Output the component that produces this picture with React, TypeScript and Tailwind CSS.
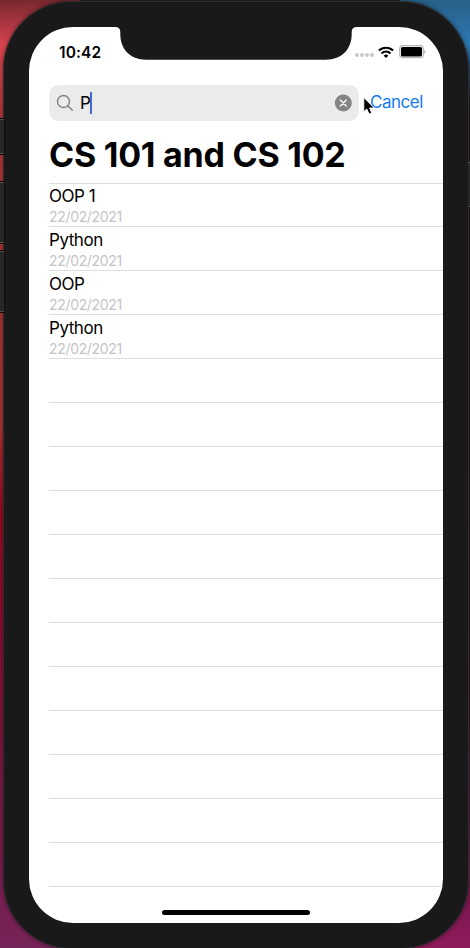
type Lecture = { name: string; date: string };

const lectures: Lecture[] = [
  { name: "OOP 1", date: "22/02/2021" },
  { name: "Python", date: "22/02/2021" },
  { name: "OOP", date: "22/02/2021" },
  { name: "Python", date: "22/02/2021" },
];

const emptyRows = Array.from({ length: 12 }, (_, i) => i);

function Notch() {
  return (
    <svg className="absolute left-[86px] top-0" width="242" height="33" viewBox="0 0 242 33" fill="#191919">
      <path d="M0 0C3.5 0 5.3 1.6 5.3 5V7C5.3 22 15 32.7 31 32.7H211C227 32.7 236.7 22 236.7 7V5C236.7 1.6 238.5 0 242 0Z" />
    </svg>
  );
}

function StatusBar() {
  return (
    <div className="flex h-[58px] items-start justify-between pl-[30px] pr-[17px]">
      <div className="pt-4 text-[15.5px] font-semibold leading-5 tracking-[0.1px]">10:42</div>
      <div className="flex items-center pt-[18px]">
        <div className="mr-[4px] mt-[6px] flex gap-[1px]">
          {[0, 1, 2, 3].map((i) => (
            <span key={i} className="size-1 rounded-full bg-[#c9c9c9]" />
          ))}
        </div>
        <svg width="16" height="13" viewBox="0 0 16 13" fill="none" stroke="#000" strokeWidth="2.1">
          <path d="M.9 4.600a10.200 10.200 0 0 1 14.200 0" />
          <path d="M3.500 7.400a6.400 6.400 0 0 1 9 0" />
          <path d="M8 12 5.700 9.700a3.300 3.300 0 0 1 4.600 0Z" fill="#000" stroke="none" />
        </svg>
        <svg className="ml-[5px]" width="27" height="14" viewBox="0 0 27 14">
          <rect x=".7" y=".7" width="23.6" height="12" rx="3.2" fill="#fff" stroke="#b5b5b5" strokeWidth="1.2" />
          <rect x="2" y="2" width="21" height="9.4" rx="1.6" />
          <path d="M25.300 4.800v4c1.600-.7 1.600-3.300 0-4Z" fill="#aaa" />
        </svg>
      </div>
    </div>
  );
}

function SearchBar() {
  return (
    <div className="flex h-9 items-center pl-5">
      <div className="flex h-9 w-[310px] items-center rounded-[10px] bg-[#ebebeb] pl-[7px] pr-[7px]">
        <svg width="18" height="18" viewBox="0 0 18 18" fill="none" stroke="#858589" strokeWidth="1.5" strokeLinecap="round">
          <circle cx="7.5" cy="7.5" r="6" />
          <path d="m12 12 4.300 4.300" />
        </svg>
        <span className="ml-[6px] text-[17px] leading-6">P</span>
        <span className="-ml-px h-[22px] w-[2px] bg-[#4568d8]" />
        <svg className="ml-auto" width="18" height="18" viewBox="0 0 18 18">
          <circle cx="9.3" cy="9" r="8.5" fill="#848487" />
          <path d="m6.300 6 6 6m0-6-6 6" stroke="#f2f2f2" strokeWidth="1.5" strokeLinecap="round" />
        </svg>
      </div>
      <button className="mb-[2px] ml-[11px] text-[17px] leading-6 tracking-[-0.5px] text-[#147bf5]">Cancel</button>
    </div>
  );
}

function Pointer() {
  return (
    <svg className="absolute left-[334px] top-[70px]" width="13" height="18" viewBox="0 0 13 18">
      <path d="M.8.500v14.200l3-2.700 2.300 5 2.600-1.100-2.100-4.900h4.700Z" fill="#000" stroke="#fff" strokeWidth=".9" strokeLinejoin="round" />
    </svg>
  );
}

export default function App() {
  return (
    <div
      className="relative flex h-[948px] w-[470px] overflow-hidden bg-[linear-gradient(to_bottom,#7a2730_0,#d84450_45px,#b03436_120px,#a93232_330px,#ab3030_430px,#9a0820_510px,#8c0c30_640px,#801647_790px,#762357_948px)] pl-[3px] text-black antialiased"
      style={{ fontFamily: 'Inter, "Liberation Sans", sans-serif' }}
    >
      <div className="absolute right-0 top-0 h-[474px] w-[235px] bg-[linear-gradient(to_bottom,#286087_0,#2d79b4_45px,#183e5e_75px,#201416_110px,#201416_474px)]" />
      <div className="absolute bottom-0 right-0 h-[474px] w-[235px] bg-[linear-gradient(to_bottom,#201416_0,#331119_200px,#521039_330px,#8f1b5b_474px)]" />
      <div className="absolute left-[80px] top-0 h-1 w-[320px] bg-[#24191a]" />

      <div className="relative mt-px h-[948px] w-[466px] shrink-0 rounded-[68px] border border-[#302e30] bg-[#191919] pl-[25px] pt-[25px] shadow-[0_0_4px_rgba(0,0,0,0.5)]">
        <main className="relative flex h-[896px] w-[414px] flex-col overflow-hidden rounded-[44px] bg-white">
          <Notch />
          <StatusBar />
          <SearchBar />
          <Pointer />
          <h1 className="ml-5 mt-[13px] h-[49px] whitespace-nowrap text-[34px] font-bold leading-[42px] tracking-[-0.24px]">
            CS 101 and CS 102
          </h1>
          <ul className="ml-5 border-t border-[#dedede]">
            {lectures.map((lecture, i) => (
              <li key={i} className={`${i === 0 ? "h-[43px]" : "h-11 pt-px"} border-b border-[#dedede]`}>
                <div className="h-[24px] text-[17px] leading-6 tracking-[-0.45px]">{lecture.name}</div>
                <div className="text-[14px] leading-[18px] tracking-[-0.33px] text-[#c4c4c6]">{lecture.date}</div>
              </li>
            ))}
            {emptyRows.map((row) => (
              <li key={row} className="h-11 border-b border-[#dedede]" />
            ))}
          </ul>
          <div className="mx-auto mb-2 mt-auto h-[5px] w-[148px] rounded-full bg-black" />
        </main>
      </div>

      {/* Side buttons */}
      <div className="absolute left-0 top-[119px] h-[35px] w-1 border-y border-[#4c4c4c] bg-[#272727] shadow-[0_0_0_1px_#1a0b0b]" />
      <div className="absolute left-0 top-[182px] h-[61px] w-1 border-y border-[#4c4c4c] bg-[#272727] shadow-[0_0_0_1px_#1a0b0b]" />
      <div className="absolute left-0 top-[251px] h-[61px] w-1 border-y border-[#4c4c4c] bg-[#272727] shadow-[0_0_0_1px_#1a0b0b]" />
      <div className="absolute right-0 top-[162px] h-[45px] w-[2px] border-y border-[#4c4c4c] bg-[#272727]" />
    </div>
  );
}
